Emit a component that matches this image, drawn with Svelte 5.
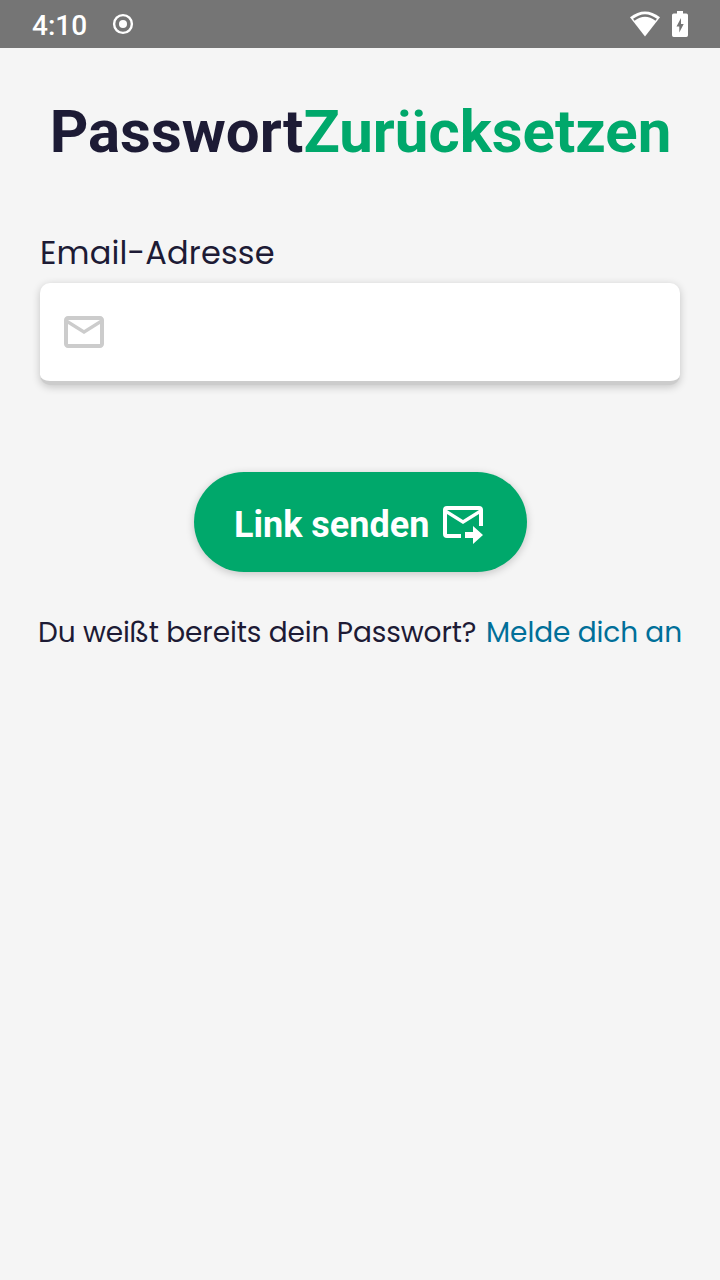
<script>
  let email = $state('');
</script>

<div class="screen">
  <header class="status">
    <span class="time">4:10</span>
    <svg class="target" width="22" height="22" viewBox="0 0 22 22">
      <circle cx="11" cy="11" r="8.9" fill="none" stroke="#fff" stroke-width="2.4" />
      <circle cx="11" cy="11" r="4" fill="#fff" />
    </svg>
    <svg class="wifi" width="32" height="28" viewBox="0 0 32 28">
      <path fill="#fff" d="M1 7.3Q16-4.5 31 7.3L16 26.500Z" />
      <path fill="none" stroke="#757575" stroke-width="2.4" d="M4.8 9.8Q16 1 27.2 9.8" />
    </svg>
    <svg class="battery" width="16" height="26" viewBox="0 0 16 26">
      <path fill="#fff" d="M5 0h6v2.5h3.3q1.7 0 1.7 1.7v20q0 1.8-1.7 1.8H1.7Q0 26 0 24.200V4.200q0-1.700 1.700-1.700H5Z" />
      <path fill="#757575" d="M9 7L4.500 15.500H7.300V21.500L11.700 13H9Z" />
    </svg>
  </header>

  <main>
    <h1><span>Passwort</span><span class="accent">Zurücksetzen</span></h1>

    <label for="email">Email-Adresse</label>
    <div class="field">
      <svg width="48" height="48" viewBox="0 0 24 24" fill="#ccc">
        <path d="M22 6C22 4.900 21.100 4 20 4H4C2.900 4 2 4.900 2 6V18C2 19.100 2.900 20 4 20H20C21.100 20 22 19.100 22 18V6M20 6L12 11L4 6H20M20 18H4V8L12 13L20 8V18Z" />
      </svg>
      <input id="email" type="email" bind:value={email} />
    </div>

    <button type="button">
      <span>Link senden</span>
      <svg width="48" height="48" viewBox="0 0 24 24" fill="#fff">
        <path d="M13 17H17V14L22 18.500L17 23V20H13V17M11 18H4V8L12 13L20 8V14H22V6A2 2 0 0 0 20 4H4A2 2 0 0 0 2 6V18A2 2 0 0 0 4 20H11V18M20 6L12 11L4 6H20Z" />
      </svg>
    </button>

    <p><span class="question">Du weißt bereits dein Passwort?</span><a href="#login">Melde dich an</a></p>
  </main>
</div>

<style>
  :global(body) { margin: 0; background: #f5f5f5; }
  .screen {
    width: 720px;
    height: 1280px;
    overflow: hidden;
    background: #f5f5f5;
    color: #1d1b35;
    font-family: Roboto, sans-serif;
  }
  .status {
    display: flex;
    align-items: center;
    box-sizing: border-box;
    height: 48px;
    padding: 0 32px;
    background: #757575;
    color: #fff;
  }
  .time { width: 80px; font-size: 28px; font-weight: 500; line-height: 46px; padding-top: 3px; }
  .wifi { margin-left: auto; margin-right: 11px; }
  main {
    display: flex;
    flex-direction: column;
    align-items: center;
    padding: 49px 38px 0;
  }
  h1 { margin: 0 0 0 1px; font-size: 60px; line-height: 70px; font-weight: 700; white-space: nowrap; }
  .accent { color: #00a86b; }
  label {
    align-self: flex-start;
    margin: 66px 0 0 2px;
    font-family: Poppins, Inter, sans-serif;
    font-size: 32px;
    line-height: 40px;
    letter-spacing: 0.16px;
    white-space: nowrap;
  }
  .field {
    display: flex;
    align-items: center;
    box-sizing: border-box;
    width: 640px;
    height: 102px;
    margin-top: 10px;
    padding: 0 20px;
    background: #fff;
    border-bottom: 4px solid #ccc;
    border-radius: 10px;
    box-shadow: 0 2px 8px rgba(0, 0, 0, 0.2);
  }
  input { flex: 1; min-width: 0; height: 60px; margin-left: 12px; border: 0; outline: 0; background: none; font: 32px Inter, sans-serif; }
  button {
    display: flex;
    align-items: center;
    box-sizing: border-box;
    width: 333px;
    height: 100px;
    margin: 87px 0 0 1px;
    padding: 0 0 0 40px;
    border: 0;
    border-radius: 50px;
    background: #00a86b;
    box-shadow: 0 2px 8px rgba(0, 0, 0, 0.2);
    color: #fff;
    font: 700 36px/42px Roboto, sans-serif;
    white-space: nowrap;
  }
  button span { width: 205px; text-align: left; padding-top: 5px; }
  p {
    display: flex;
    align-self: stretch;
    justify-content: space-between;
    margin: 41px 0 0;
    font-family: Poppins, Inter, sans-serif;
    font-size: 28px;
    line-height: 40px;
    letter-spacing: -0.1px;
    white-space: nowrap;
  }
  a { color: #006f99; text-decoration: none; }
</style>
